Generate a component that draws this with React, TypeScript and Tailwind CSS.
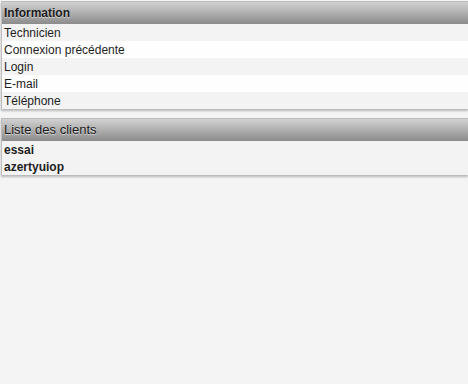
import React from "react";

const infoRows = ["Technicien", "Connexion précédente", "Login", "E-mail", "Téléphone"];
const clients = ["essai", "azertyuiop"];

function PanelHeader({ title, bold }: { title: string; bold?: boolean }) {
  return (
    <div
      className={`flex h-[22px] items-center bg-gradient-to-b from-[#d2d2d2] to-[#8c8c8c] px-[2px] text-[#1c1c1c] [text-shadow:0_1px_1px_rgba(255,255,255,0.6)] ${
        bold ? "text-[12px] font-bold" : "text-[13px] font-normal"
      }`}
    >
      {title}
    </div>
  );
}

export default function App(): React.JSX.Element {
  return (
    <div className="min-h-[384px] w-full bg-[#f4f4f4] pl-[1px] pt-[1px] font-['Liberation_Sans',Arial,sans-serif]">
      <div className="border-l border-t border-[#bdbdbd] shadow-[0_2px_2px_rgba(0,0,0,0.25)]">
        <PanelHeader title="Information" bold />
        {infoRows.map((label, i) => (
          <div
            key={label}
            className={`flex h-[17px] items-center px-[2px] text-[12px] text-[#1e1e1e] ${
              i % 2 === 0 ? "bg-[#f3f3f3]" : "bg-[#fefefe]"
            }`}
          >
            {label}
          </div>
        ))}
      </div>

      <div className="mt-[9px] border-l border-t border-[#bdbdbd] shadow-[0_2px_2px_rgba(0,0,0,0.25)]">
        <PanelHeader title="Liste des clients" />
        <div className="bg-[#f3f3f3]">
          {clients.map((name) => (
            <div key={name} className="flex h-[17px] items-center px-[2px] text-[12px] font-bold text-[#1e1e1e]">
              {name}
            </div>
          ))}
        </div>
      </div>
    </div>
  );
}
